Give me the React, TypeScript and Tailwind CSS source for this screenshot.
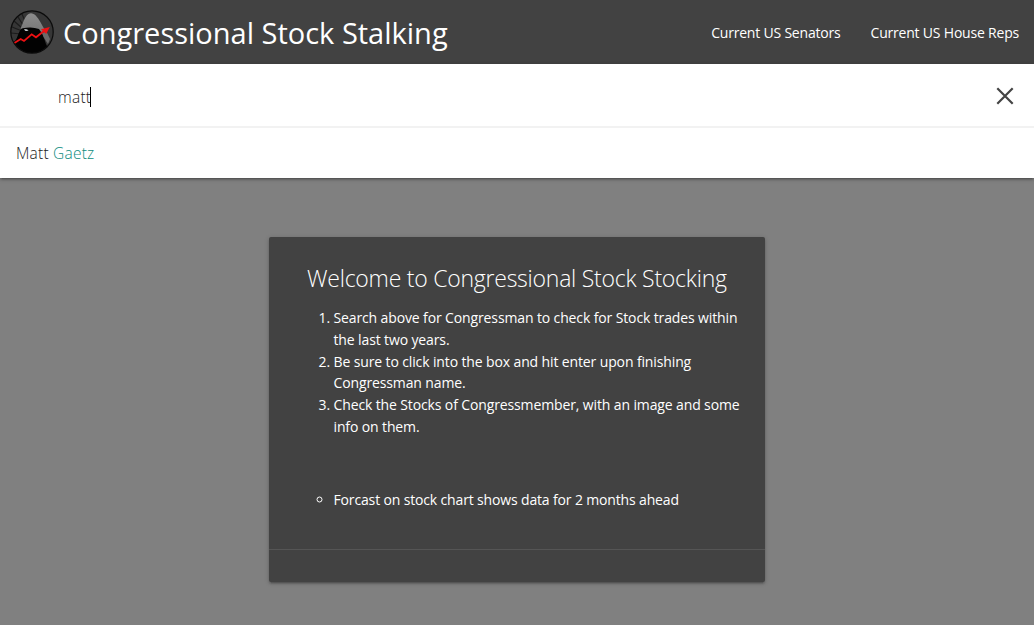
import React from "react";

const steps = [
  ["Search above for Congressman to check for Stock trades within", "the last two years."],
  ["Be sure to click into the box and hit enter upon finishing", "Congressman name."],
  ["Check the Stocks of Congressmember, with an image and some", "info on them."],
];

function Logo() {
  return (
    <svg viewBox="0 0 44 44" className="h-11 w-11 shrink-0" aria-hidden="true">
      <defs>
        <clipPath id="disc">
          <circle cx="22" cy="22" r="21" />
        </clipPath>
        <linearGradient id="hood" x1="0" y1="0" x2="0" y2="1">
          <stop offset="0" stopColor="#8c8c8c" />
          <stop offset="1" stopColor="#757575" />
        </linearGradient>
      </defs>
      <circle cx="22" cy="22" r="21" fill="#363636" />
      <g clipPath="url(#disc)">
        <path
          d="M12 21 2 17M12 18 4 11M13 15 8 7M15 11 12 4M11 24 1 23"
          stroke="#1c1c1c"
          strokeWidth="1.2"
        />
        <path d="M10.5 18.5C13 14 14 7 18.5 4Q21.5 2.2 25 4.8C30 10 31.5 15 34.5 19L31 24Z" fill="url(#hood)" />
        <path d="M5 31C8 28 8.5 20 12.5 18.3Q22 16.300 29 19L33 25 36 34 41 44H0V33Z" fill="#020202" />
        <path d="M32 23 36.5 21.5 40 29 38 34 33.5 27Z" fill="#6a6a6a" />
        <path d="M13.8 19.5Q16.5 18.4 18.6 20.6L15.8 21Z" fill="#dfe7ea" />
      </g>
      <path d="M4 33.3 10.7 29 14 31 21.7 24.3 26 27.3 34 21" fill="none" stroke="#ee1013" strokeWidth="1.8" />
      <path d="M31 19.3 39.8 17 36.2 24Z" fill="#ee1013" />
      <circle cx="22" cy="22" r="21.2" fill="none" stroke="#0b0b0b" strokeWidth="1.2" />
    </svg>
  );
}

function Header() {
  return (
    <header className="flex h-16 items-center bg-[#424242] pl-[10px] pr-[15px] text-white">
      <Logo />
      <h1 className="ml-[9px] mt-0.5 whitespace-nowrap text-[29px] leading-10">
        Congressional Stock Stalking
      </h1>
      <nav className="ml-auto mt-px flex gap-[30px] whitespace-nowrap text-[14px] tracking-[-0.2px]">
        <a href="#senators">Current US Senators</a>
        <a href="#house">Current US House Reps</a>
      </nav>
    </header>
  );
}

function Search() {
  return (
    <section className="relative bg-white text-[#222] shadow-[0_2px_2px_0_rgba(0,0,0,0.14),0_3px_1px_-2px_rgba(0,0,0,0.12),0_1px_5px_0_rgba(0,0,0,0.2)]">
      <div className="flex h-16 items-center border-b-2 border-[#f2f2f2] pl-[58px] pr-[20px]">
        <div className="mt-[3px] flex items-center">
          <span className="mt-0.5 text-[15.5px] font-light tracking-[0.25px]">matt</span>
          <span className="-ml-px h-5 w-px bg-black" />
        </div>
        <svg viewBox="0 0 18 18" className="ml-auto mt-0.5 h-[18px] w-[18px] text-[#444]" aria-hidden="true">
          <path d="m1.3 1.3 15.4 15.4m0-15.4L1.3 16.7" stroke="currentColor" strokeWidth="2.2" />
        </svg>
      </div>
      <div className="flex h-[50px] items-center pl-4 pt-0.5 text-[15.5px] font-light tracking-[0.22px]">
        <p>
          Matt <span className="text-[#0d8c80]">Gaetz</span>
        </p>
      </div>
    </section>
  );
}

function WelcomeCard() {
  return (
    <main className="mx-auto mt-[59px] flex h-[345px] w-[496px] flex-col rounded-[2px] bg-[#424242] text-white shadow-[0_2px_2px_0_rgba(0,0,0,0.14),0_3px_1px_-2px_rgba(0,0,0,0.12),0_1px_5px_0_rgba(0,0,0,0.2)]">
      <div className="flex-1 whitespace-nowrap pl-[38px] pt-[25px] text-[14px] leading-[21.75px]">
        <h2 className="mb-[13px] text-[23px] font-light leading-8 tracking-[-0.24px]">
          Welcome to Congressional Stock Stocking
        </h2>
        <ol className="list-decimal pl-[26.5px] tracking-[-0.125px]">
          {steps.map(([first, second]) => (
            <li key={first}>
              {first}
              <br />
              {second}
            </li>
          ))}
        </ol>
        <ul className="mt-[51px] list-[circle] pl-[26.5px] tracking-[-0.15px]">
          <li>Forcast on stock chart shows data for 2 months ahead</li>
        </ul>
      </div>
      <div className="h-[33px] border-t border-[#555]" />
    </main>
  );
}

export default function App() {
  return (
    <div className="h-[625px] overflow-hidden bg-[#808080] font-['Open_Sans','Noto_Sans',sans-serif]">
      <Header />
      <Search />
      <WelcomeCard />
    </div>
  );
}
